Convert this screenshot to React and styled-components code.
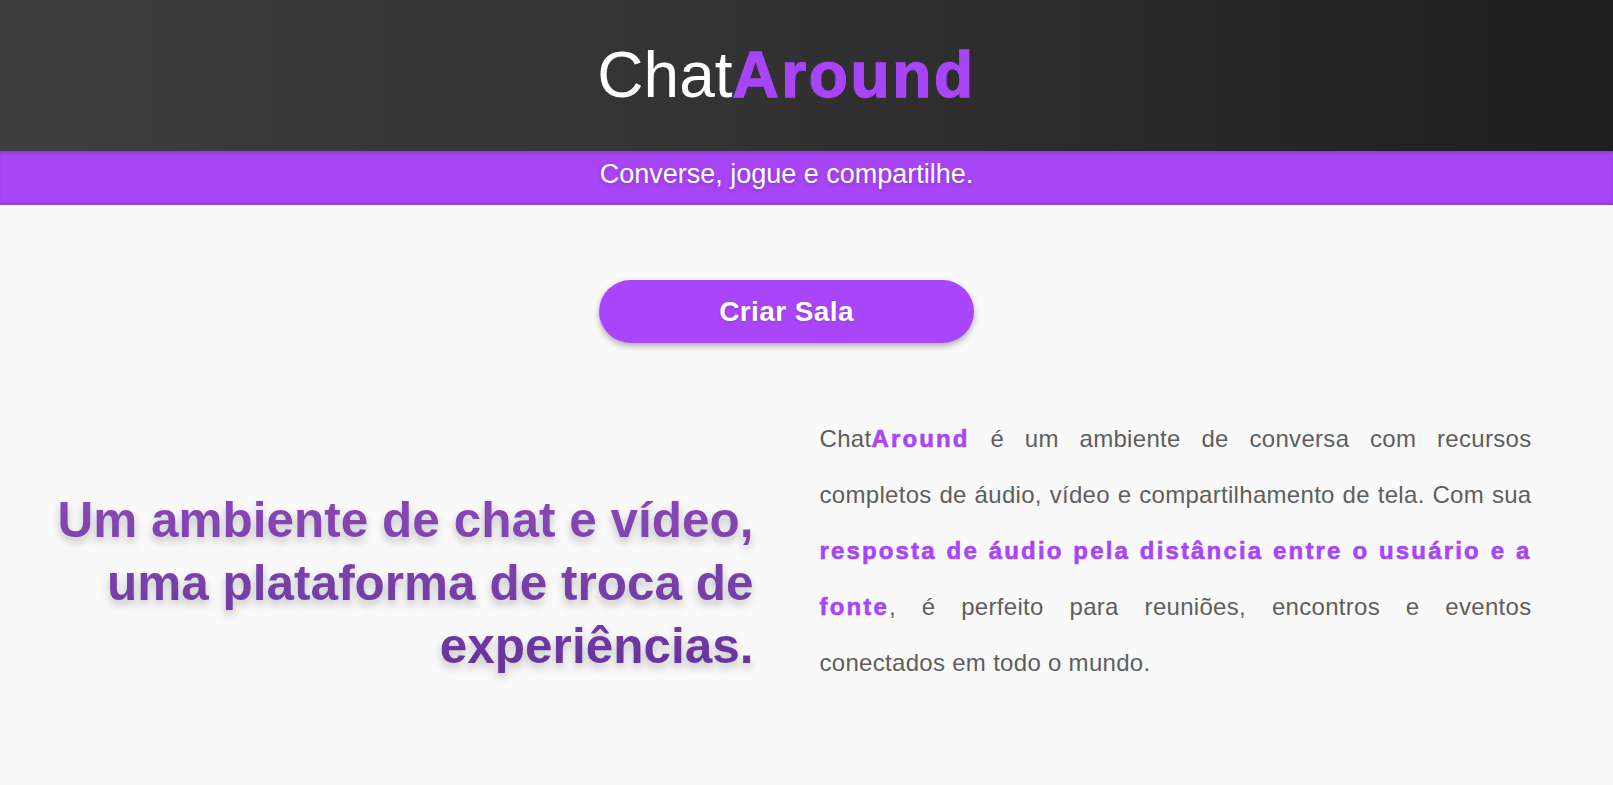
import React from "react";
import styled, { createGlobalStyle } from "styled-components";

const GlobalStyle = createGlobalStyle`
  html, body {
    margin: 0;
    padding: 0;
    background: #f9f9f9;
    font-family: "Liberation Sans", Arial, sans-serif;
  }
`;

const App = () => {
  return (
    <>
      <GlobalStyle />
      <Header>
        <Logo>
          Chat<Strong $spacing="2.6px" $stroke="1.4px">Around</Strong>
        </Logo>
      </Header>
      <Band>
        <Tagline>Converse, jogue e compartilhe.</Tagline>
      </Band>

      <ButtonRow>
        <CreateButton>Criar Sala</CreateButton>
      </ButtonRow>

      <Content>
        <Columns>
          <Headline>
            Um ambiente de chat e vídeo, uma plataforma de troca de experiências.
          </Headline>
          <Description>
            Chat<Strong>Around</Strong> é um ambiente de conversa com recursos
            completos de áudio, vídeo e compartilhamento de tela. Com sua{" "}
            <Strong>resposta de áudio pela distância entre o usuário e a fonte</Strong>, é
            perfeito para reuniões, encontros e eventos conectados em todo o mundo.
          </Description>
        </Columns>
      </Content>
    </>
  );
};

export default App;

/* ---------- styled-components ---------- */

const Header = styled.header`
  height: 151px;
  display: flex;
  align-items: center;
  justify-content: center;
  padding-right: 40px;
  background: linear-gradient(to right, #3d3d3d 0%, #333 45%, #1e1e1e 100%);
`;

const Logo = styled.h1`
  margin: 0;
  font-size: 64px;
  font-weight: 400;
  line-height: 1.15;
  color: #ffffff;
`;

const Strong = styled.b`
  font-weight: 700;
  color: #a945f8;
  letter-spacing: ${({ $spacing }) => $spacing || "2.15px"};
  -webkit-text-stroke: ${({ $stroke }) => $stroke || "0.6px"} #a945f8;
`;

const Band = styled.div`
  height: 54px;
  box-sizing: border-box;
  padding: 8px 40px 0 0;
  display: flex;
  justify-content: center;
  background: #a845f7;
  box-shadow: inset 0 4px 5px -3px rgba(0, 0, 0, 0.2),
    inset 0 -4px 4px -3px rgba(0, 0, 0, 0.18);
`;

const Tagline = styled.p`
  margin: 0;
  font-size: 27px;
  line-height: 30px;
  color: #ffffff;
  text-shadow: 0 2px 4px rgba(0, 0, 0, 0.18);
`;

const ButtonRow = styled.div`
  display: flex;
  justify-content: center;
  padding: 75px 40px 0 0;
`;

const CreateButton = styled.button`
  width: 375px;
  height: 63px;
  border: none;
  border-radius: 32px;
  background: #aa46f9;
  color: #ffffff;
  font-family: "Liberation Sans", Arial, sans-serif;
  font-size: 28px;
  font-weight: 700;
  letter-spacing: 0.4px;
  cursor: pointer;
  box-shadow: 0 3px 6px rgba(0, 0, 0, 0.3);
  text-shadow: 0 1px 3px rgba(0, 0, 0, 0.15);
`;

const Content = styled.section`
  padding: 68px 40px 60px 0;
`;

const Columns = styled.div`
  width: 1490px;
  margin: 0 auto;
  display: grid;
  grid-template-columns: 712px 712px;
  column-gap: 66px;
  align-items: start;
`;

const Headline = styled.h2`
  margin: 77px 0 0;
  text-align: right;
  font-size: 49.5px;
  font-weight: 700;
  line-height: 63px;
  background: linear-gradient(to bottom, #8a48b8 0%, #7740a9 50%, #66329a 100%);
  -webkit-background-clip: text;
  background-clip: text;
  color: transparent;
  filter: drop-shadow(0 5px 4px rgba(0, 0, 0, 0.22));
`;

const Description = styled.p`
  margin: 0;
  font-size: 24px;
  line-height: 56px;
  letter-spacing: 0.3px;
  text-align: justify;
  color: #5e5e5e;
`;
